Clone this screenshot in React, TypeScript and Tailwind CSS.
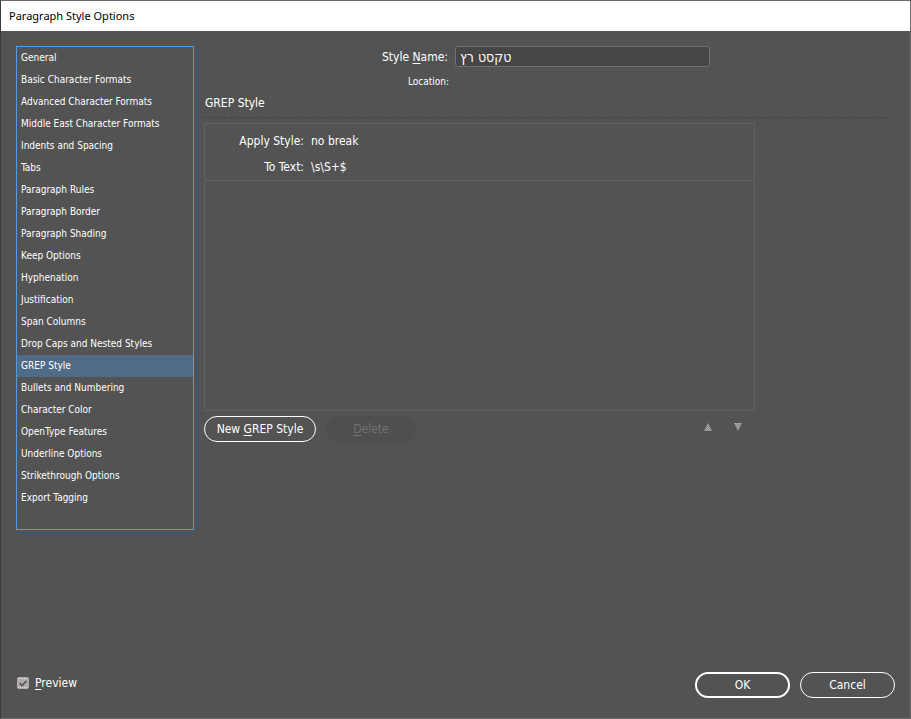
import { useState, type ReactNode } from "react";
import clsx from "clsx";

const CATEGORIES = [
  "General",
  "Basic Character Formats",
  "Advanced Character Formats",
  "Middle East Character Formats",
  "Indents and Spacing",
  "Tabs",
  "Paragraph Rules",
  "Paragraph Border",
  "Paragraph Shading",
  "Keep Options",
  "Hyphenation",
  "Justification",
  "Span Columns",
  "Drop Caps and Nested Styles",
  "GREP Style",
  "Bullets and Numbering",
  "Character Color",
  "OpenType Features",
  "Underline Options",
  "Strikethrough Options",
  "Export Tagging",
];

export default function App() {
  const [category, setCategory] = useState("GREP Style");
  const [styleName, setStyleName] = useState("טקסט רץ");
  const [preview, setPreview] = useState(true);

  return (
    <div className="flex min-h-screen flex-col border border-t-[#6b6b6b] border-r-[#6b6b6b] border-b-[#6b6b6b] border-l-[#3c3c3c] bg-[#535353] font-['DejaVu_Sans_Condensed','DejaVu_Sans',sans-serif] text-[12px] leading-4 text-white">
      <header className="flex h-[30px] items-center bg-white px-2 font-['Noto_Sans',sans-serif] text-[11px] text-black">
        <h1>Paragraph Style Options</h1>
      </header>

      <div className="flex flex-1 items-start gap-[10px] pt-[15px] pr-[22px] pl-[15px]">
        <CategoryList selected={category} onSelect={setCategory} />

        <main className="min-w-0 flex-1">
          <div className="flex items-center">
            <label htmlFor="style-name" className="w-[244px] text-right">
              Style <Key>N</Key>ame:
            </label>
            <input
              id="style-name"
              value={styleName}
              onChange={(e) => setStyleName(e.target.value)}
              className="ml-[7px] h-[21px] w-[255px] rounded-[3px] border border-[#707070] bg-[#464646] px-1 text-[14px] outline-none"
            />
          </div>
          <p className="mt-[7px] w-[245px] text-right text-[10px]">Location:</p>

          <h2 className="mt-1 pb-[5px] pl-px leading-[18px]">GREP Style</h2>
          <hr className="border-t border-dashed border-[#444444]" />

          <section className="mt-[5px] h-[288px] w-[551px] max-w-full border border-[#606060]">
            <dl className="grid grid-cols-[99px_1fr] gap-x-[7px] gap-y-[10px] border-b border-[#606060] pt-[9px] pb-[5px]">
              <dt className="text-right">Apply Style:</dt>
              <dd>no break</dd>
              <dt className="text-right">To Text:</dt>
              <dd>\s\S+$</dd>
            </dl>
          </section>

          <div className="mt-[5px] flex w-[551px] max-w-full items-center gap-[10px]">
            <button type="button" className="h-[26px] w-[112px] rounded-full border border-white">
              New <Key>G</Key>REP Style
            </button>
            <button type="button" disabled className="h-[26px] w-[90px] rounded-full bg-[#4f4f4f] text-[#717171]">
              <Key>D</Key>elete
            </button>
            <div className="ml-auto flex gap-5 pr-3 pb-1">
              <MoveButton label="Move up" points="5,0 9,8 1,8" />
              <MoveButton label="Move down" points="1,0 9,0 5,8" />
            </div>
          </div>
        </main>
      </div>

      <footer className="flex items-center gap-[10px] pr-[15px] pb-5 pl-4">
        <label className="mr-auto flex items-center gap-[6px] pb-1">
          <span className="relative flex">
            <input
              type="checkbox"
              checked={preview}
              onChange={(e) => setPreview(e.target.checked)}
              className="size-3 appearance-none rounded-[2px] bg-[#b0acac]"
            />
            {preview && (
              <svg viewBox="0 0 12 12" className="pointer-events-none absolute inset-0 size-3">
                <path d="M1 1.5h10M1 10.5h10" stroke="#e4dede" strokeDasharray="1 1" fill="none" />
                <path d="M2.5 6l2.5 2.5L9.5 4" stroke="#505050" strokeWidth="1.6" fill="none" />
              </svg>
            )}
          </span>
          <span>
            <Key>P</Key>review
          </span>
        </label>
        <button type="button" className="h-[26px] w-[95px] rounded-full border-2 border-white">
          OK
        </button>
        <button type="button" className="h-[26px] w-[95px] rounded-full border border-white">
          Cancel
        </button>
      </footer>
    </div>
  );
}

function CategoryList({ selected, onSelect }: { selected: string; onSelect: (name: string) => void }) {
  return (
    <nav className="w-[178px] shrink-0 border border-[#4a9eea] pb-5 text-[10px]">
      <ul>
        {CATEGORIES.map((name) => (
          <li key={name}>
            <button
              type="button"
              onClick={() => onSelect(name)}
              className={clsx("h-[22px] w-full px-1 text-left whitespace-nowrap", name === selected && "bg-[#4f6b87]")}
            >
              {name}
            </button>
          </li>
        ))}
      </ul>
    </nav>
  );
}

// underlined access key
function Key({ children }: { children: ReactNode }) {
  return <span className="underline underline-offset-2">{children}</span>;
}

function MoveButton({ label, points }: { label: string; points: string }) {
  return (
    <button type="button" aria-label={label}>
      <svg width="10" height="9" viewBox="0 0 10 9">
        <defs>
          <pattern id={label.replace(" ", "-")} width="2" height="2" patternUnits="userSpaceOnUse">
            <rect width="2" height="2" fill="#868686" />
            <rect width="1" height="1" fill="#b8b8b8" />
            <rect x="1" y="1" width="1" height="1" fill="#a0a0a0" />
          </pattern>
        </defs>
        <polygon points={points} fill={`url(#${label.replace(" ", "-")})`} />
      </svg>
    </button>
  );
}
